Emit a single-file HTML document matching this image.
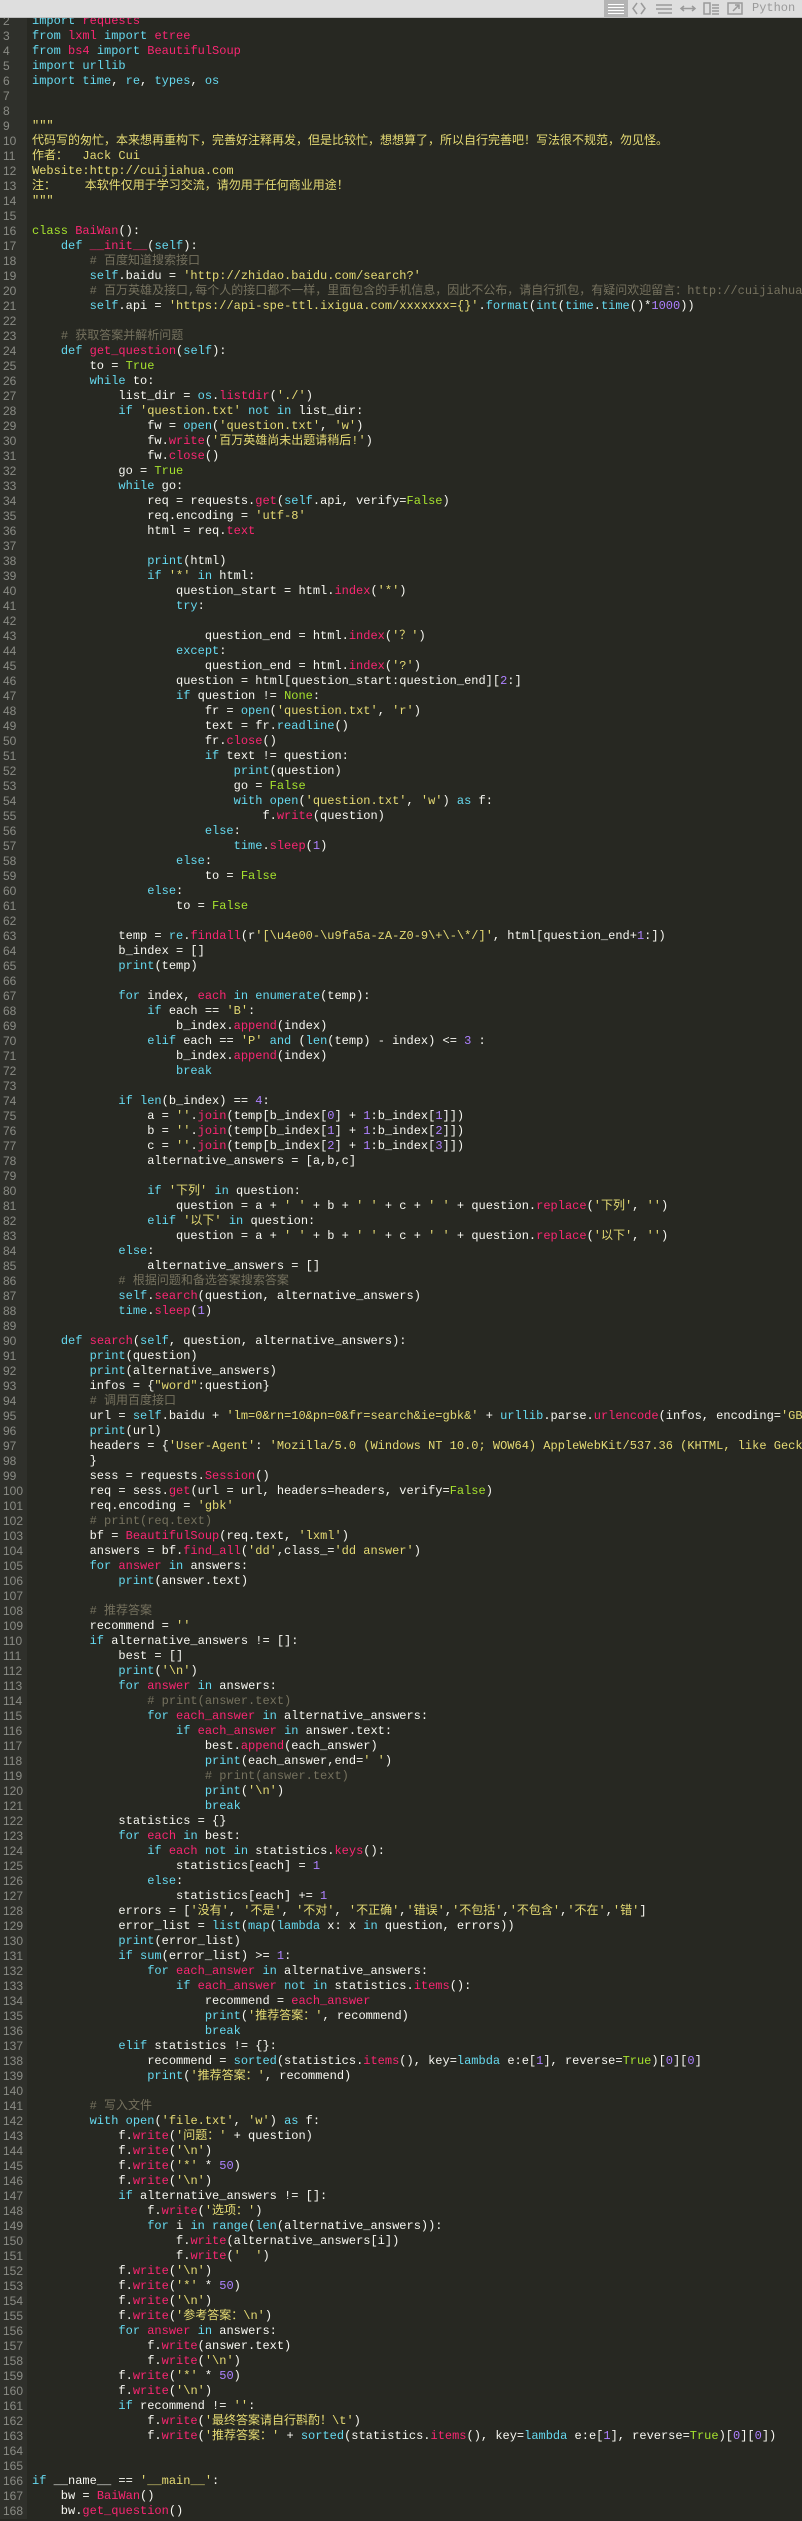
<!DOCTYPE html>
<html><head><meta charset="utf-8">
<style>
html,body{margin:0;padding:0;width:802px;height:2521px;overflow:hidden;background:#272822;}
#w{position:relative;width:802px;height:2521px;overflow:hidden;}
#bar{position:absolute;left:0;top:0;width:802px;height:17px;background:#dedede;border-bottom:1px solid #bdbdbd;z-index:5;}
#bar .hl{position:absolute;left:604px;top:0;width:24px;height:17px;background:#b4b4b4;}
#bar .t{position:absolute;left:752px;top:1px;font:12px "Liberation Mono",monospace;color:#9a9a9a;}
#gut{position:absolute;left:0;top:-1px;width:27px;background:#2f302b;}
#gut div{height:15px;line-height:15px;font:12px/15px "Liberation Sans",sans-serif;color:#8a8b85;padding-left:3px;}
#cw{position:absolute;left:32px;top:-1px;width:770px;height:2522px;overflow:hidden;}
pre{margin:0;font:12px/15px "Liberation Mono","Noto Sans CJK SC",monospace;color:#f8f8f2;white-space:pre;}
.k{color:#66d9ef}.r{color:#f92672}.s{color:#e6db74}.c{color:#75715e}.n{color:#ae81ff}.g{color:#a6e22e}
</style></head><body><div id="w">
<div id="bar">
<div class="hl"><svg width="24" height="17"><g stroke="#fff" stroke-width="1"><line x1="4" y1="4.5" x2="20" y2="4.5"/><line x1="4" y1="7.5" x2="20" y2="7.5"/><line x1="4" y1="10.5" x2="20" y2="10.5"/><line x1="4" y1="13.5" x2="20" y2="13.5"/></g></svg></div>
<svg style="position:absolute;left:630px;top:0" width="120" height="17"><g stroke="#9a9a9a" stroke-width="1.5" fill="none"><path d="M7 3 L3 8.5 L7 14 M11 3 L15 8.5 L11 14"/><path d="M26 5 H42 M26 9 H42 M28 13 H42"/><path d="M51 8.5 H65 M54 6 L51 8.5 L54 11 M62 6 L65 8.5 L62 11"/><rect x="74" y="3" width="6" height="11"/><path d="M82 5 H89 M82 8 H89 M82 11 H89 M82 14 H89"/><rect x="98" y="3" width="14" height="11"/><path d="M103 11 L109 5 M105 5 H109 V9"/></g></svg>
<div class="t">Python</div>
</div>
<div id="gut"></div>
<div id="cw"><pre><span class="c"># -*- coding:UTF-8 -*-</span>
<span class="k">import</span> <span class="r">requests</span>
<span class="k">from</span> <span class="r">lxml</span> <span class="k">import</span> <span class="r">etree</span>
<span class="k">from</span> <span class="r">bs4</span> <span class="k">import</span> <span class="r">BeautifulSoup</span>
<span class="k">import urllib</span>
<span class="k">import time</span>, <span class="k">re</span>, <span class="k">types</span>, <span class="k">os</span>


<span class="s">"""</span>
<span class="s">代码写的匆忙，本来想再重构下，完善好注释再发，但是比较忙，想想算了，所以自行完善吧！写法很不规范，勿见怪。</span>
<span class="s">作者：  Jack Cui</span>
<span class="s">Website:http://cuijiahua.com</span>
<span class="s">注：    本软件仅用于学习交流，请勿用于任何商业用途！</span>
<span class="s">"""</span>

<span class="g">class</span> <span class="r">BaiWan</span>():
    <span class="k">def</span> <span class="r">__init__</span>(<span class="k">self</span>):
        <span class="c"># 百度知道搜索接口</span>
        <span class="k">self</span>.baidu = <span class="s">'http://zhidao.baidu.com/search?'</span>
        <span class="c"># 百万英雄及接口,每个人的接口都不一样，里面包含的手机信息，因此不公布，请自行抓包，有疑问欢迎留言：http://cuijiahua.com</span>
        <span class="k">self</span>.api = <span class="s">'https://api-spe-ttl.ixigua.com/xxxxxxx={}'</span>.<span class="k">format</span>(<span class="k">int</span>(<span class="k">time</span>.<span class="k">time</span>()*<span class="n">1000</span>))

    <span class="c"># 获取答案并解析问题</span>
    <span class="k">def</span> <span class="r">get_question</span>(<span class="k">self</span>):
        to = <span class="g">True</span>
        <span class="k">while</span> to:
            list_dir = <span class="k">os</span>.<span class="r">listdir</span>(<span class="s">'./'</span>)
            <span class="k">if</span> <span class="s">'question.txt'</span> <span class="k">not in</span> list_dir:
                fw = <span class="k">open</span>(<span class="s">'question.txt'</span>, <span class="s">'w'</span>)
                fw.<span class="r">write</span>(<span class="s">'百万英雄尚未出题请稍后!'</span>)
                fw.<span class="r">close</span>()
            go = <span class="g">True</span>
            <span class="k">while</span> go:
                req = requests.<span class="r">get</span>(<span class="k">self</span>.api, verify=<span class="g">False</span>)
                req.encoding = <span class="s">'utf-8'</span>
                html = req.<span class="r">text</span>

                <span class="k">print</span>(html)
                <span class="k">if</span> <span class="s">'*'</span> <span class="k">in</span> html:
                    question_start = html.<span class="r">index</span>(<span class="s">'*'</span>)
                    <span class="k">try</span>:

                        question_end = html.<span class="r">index</span>(<span class="s">'？'</span>)
                    <span class="k">except</span>:
                        question_end = html.<span class="r">index</span>(<span class="s">'?'</span>)
                    question = html[question_start:question_end][<span class="n">2</span>:]
                    <span class="k">if</span> question != <span class="g">None</span>:
                        fr = <span class="k">open</span>(<span class="s">'question.txt'</span>, <span class="s">'r'</span>)
                        text = fr.<span class="k">readline</span>()
                        fr.<span class="r">close</span>()
                        <span class="k">if</span> text != question:
                            <span class="k">print</span>(question)
                            go = <span class="g">False</span>
                            <span class="k">with</span> <span class="k">open</span>(<span class="s">'question.txt'</span>, <span class="s">'w'</span>) <span class="k">as</span> f:
                                f.<span class="r">write</span>(question)
                        <span class="k">else</span>:
                            <span class="k">time</span>.<span class="r">sleep</span>(<span class="n">1</span>)
                    <span class="k">else</span>:
                        to = <span class="g">False</span>
                <span class="k">else</span>:
                    to = <span class="g">False</span>

            temp = <span class="k">re</span>.<span class="r">findall</span>(r<span class="s">'[\u4e00-\u9fa5a-zA-Z0-9\+\-\*/]'</span>, html[question_end+<span class="n">1</span>:])
            b_index = []
            <span class="k">print</span>(temp)

            <span class="k">for</span> index, <span class="r">each</span> <span class="k">in</span> <span class="k">enumerate</span>(temp):
                <span class="k">if</span> each == <span class="s">'B'</span>:
                    b_index.<span class="r">append</span>(index)
                <span class="k">elif</span> each == <span class="s">'P'</span> <span class="k">and</span> (<span class="k">len</span>(temp) - index) &lt;= <span class="n">3</span> :
                    b_index.<span class="r">append</span>(index)
                    <span class="k">break</span>

            <span class="k">if</span> <span class="k">len</span>(b_index) == <span class="n">4</span>:
                a = <span class="s">''</span>.<span class="r">join</span>(temp[b_index[<span class="n">0</span>] + <span class="n">1</span>:b_index[<span class="n">1</span>]])
                b = <span class="s">''</span>.<span class="r">join</span>(temp[b_index[<span class="n">1</span>] + <span class="n">1</span>:b_index[<span class="n">2</span>]])
                c = <span class="s">''</span>.<span class="r">join</span>(temp[b_index[<span class="n">2</span>] + <span class="n">1</span>:b_index[<span class="n">3</span>]])
                alternative_answers = [a,b,c]

                <span class="k">if</span> <span class="s">'下列'</span> <span class="k">in</span> question:
                    question = a + <span class="s">' '</span> + b + <span class="s">' '</span> + c + <span class="s">' '</span> + question.<span class="r">replace</span>(<span class="s">'下列'</span>, <span class="s">''</span>)
                <span class="k">elif</span> <span class="s">'以下'</span> <span class="k">in</span> question:
                    question = a + <span class="s">' '</span> + b + <span class="s">' '</span> + c + <span class="s">' '</span> + question.<span class="r">replace</span>(<span class="s">'以下'</span>, <span class="s">''</span>)
            <span class="k">else</span>:
                alternative_answers = []
            <span class="c"># 根据问题和备选答案搜索答案</span>
            <span class="k">self</span>.<span class="r">search</span>(question, alternative_answers)
            <span class="k">time</span>.<span class="r">sleep</span>(<span class="n">1</span>)

    <span class="k">def</span> <span class="r">search</span>(<span class="k">self</span>, question, alternative_answers):
        <span class="k">print</span>(question)
        <span class="k">print</span>(alternative_answers)
        infos = {<span class="s">"word"</span>:question}
        <span class="c"># 调用百度接口</span>
        url = <span class="k">self</span>.baidu + <span class="s">'lm=0&amp;rn=10&amp;pn=0&amp;fr=search&amp;ie=gbk&amp;'</span> + <span class="k">urllib</span>.parse.<span class="r">urlencode</span>(infos, encoding=<span class="s">'GB18030'</span>)
        <span class="k">print</span>(url)
        headers = {<span class="s">'User-Agent'</span>: <span class="s">'Mozilla/5.0 (Windows NT 10.0; WOW64) AppleWebKit/537.36 (KHTML, like Gecko) Chrome/63.0 Safari/537.36'</span>,
        }
        sess = requests.<span class="r">Session</span>()
        req = sess.<span class="r">get</span>(url = url, headers=headers, verify=<span class="g">False</span>)
        req.encoding = <span class="s">'gbk'</span>
        <span class="c"># print(req.text)</span>
        bf = <span class="r">BeautifulSoup</span>(req.text, <span class="s">'lxml'</span>)
        answers = bf.<span class="r">find_all</span>(<span class="s">'dd'</span>,class_=<span class="s">'dd answer'</span>)
        <span class="k">for</span> <span class="r">answer</span> <span class="k">in</span> answers:
            <span class="k">print</span>(answer.text)

        <span class="c"># 推荐答案</span>
        recommend = <span class="s">''</span>
        <span class="k">if</span> alternative_answers != []:
            best = []
            <span class="k">print</span>(<span class="s">'\n'</span>)
            <span class="k">for</span> <span class="r">answer</span> <span class="k">in</span> answers:
                <span class="c"># print(answer.text)</span>
                <span class="k">for</span> <span class="r">each_answer</span> <span class="k">in</span> alternative_answers:
                    <span class="k">if</span> <span class="r">each_answer</span> <span class="k">in</span> answer.text:
                        best.<span class="r">append</span>(each_answer)
                        <span class="k">print</span>(each_answer,end=<span class="s">' '</span>)
                        <span class="c"># print(answer.text)</span>
                        <span class="k">print</span>(<span class="s">'\n'</span>)
                        <span class="k">break</span>
            statistics = {}
            <span class="k">for</span> <span class="r">each</span> <span class="k">in</span> best:
                <span class="k">if</span> <span class="r">each</span> <span class="k">not in</span> statistics.<span class="r">keys</span>():
                    statistics[each] = <span class="n">1</span>
                <span class="k">else</span>:
                    statistics[each] += <span class="n">1</span>
            errors = [<span class="s">'没有'</span>, <span class="s">'不是'</span>, <span class="s">'不对'</span>, <span class="s">'不正确'</span>,<span class="s">'错误'</span>,<span class="s">'不包括'</span>,<span class="s">'不包含'</span>,<span class="s">'不在'</span>,<span class="s">'错'</span>]
            error_list = <span class="k">list</span>(<span class="k">map</span>(<span class="k">lambda</span> x: x <span class="k">in</span> question, errors))
            <span class="k">print</span>(error_list)
            <span class="k">if</span> <span class="k">sum</span>(error_list) &gt;= <span class="n">1</span>:
                <span class="k">for</span> <span class="r">each_answer</span> <span class="k">in</span> alternative_answers:
                    <span class="k">if</span> <span class="r">each_answer</span> <span class="k">not in</span> statistics.<span class="r">items</span>():
                        recommend = <span class="r">each_answer</span>
                        <span class="k">print</span>(<span class="s">'推荐答案：'</span>, recommend)
                        <span class="k">break</span>
            <span class="k">elif</span> statistics != {}:
                recommend = <span class="k">sorted</span>(statistics.<span class="r">items</span>(), key=<span class="k">lambda</span> e:e[<span class="n">1</span>], reverse=<span class="g">True</span>)[<span class="n">0</span>][<span class="n">0</span>]
                <span class="k">print</span>(<span class="s">'推荐答案：'</span>, recommend)

        <span class="c"># 写入文件</span>
        <span class="k">with</span> <span class="k">open</span>(<span class="s">'file.txt'</span>, <span class="s">'w'</span>) <span class="k">as</span> f:
            f.<span class="r">write</span>(<span class="s">'问题：'</span> + question)
            f.<span class="r">write</span>(<span class="s">'\n'</span>)
            f.<span class="r">write</span>(<span class="s">'*'</span> * <span class="n">50</span>)
            f.<span class="r">write</span>(<span class="s">'\n'</span>)
            <span class="k">if</span> alternative_answers != []:
                f.<span class="r">write</span>(<span class="s">'选项：'</span>)
                <span class="k">for</span> i <span class="k">in</span> <span class="k">range</span>(<span class="k">len</span>(alternative_answers)):
                    f.<span class="r">write</span>(alternative_answers[i])
                    f.<span class="r">write</span>(<span class="s">'  '</span>)
            f.<span class="r">write</span>(<span class="s">'\n'</span>)
            f.<span class="r">write</span>(<span class="s">'*'</span> * <span class="n">50</span>)
            f.<span class="r">write</span>(<span class="s">'\n'</span>)
            f.<span class="r">write</span>(<span class="s">'参考答案：\n'</span>)
            <span class="k">for</span> <span class="r">answer</span> <span class="k">in</span> answers:
                f.<span class="r">write</span>(answer.text)
                f.<span class="r">write</span>(<span class="s">'\n'</span>)
            f.<span class="r">write</span>(<span class="s">'*'</span> * <span class="n">50</span>)
            f.<span class="r">write</span>(<span class="s">'\n'</span>)
            <span class="k">if</span> recommend != <span class="s">''</span>:
                f.<span class="r">write</span>(<span class="s">'最终答案请自行斟酌！\t'</span>)
                f.<span class="r">write</span>(<span class="s">'推荐答案：'</span> + <span class="k">sorted</span>(statistics.<span class="r">items</span>(), key=<span class="k">lambda</span> e:e[<span class="n">1</span>], reverse=<span class="g">True</span>)[<span class="n">0</span>][<span class="n">0</span>])


<span class="k">if</span> __name__ == <span class="s">'__main__'</span>:
    bw = <span class="r">BaiWan</span>()
    bw.<span class="r">get_question</span>()</pre></div>
<script>
var g=document.getElementById('gut'),h='';
for(var i=1;i<=168;i++)h+='<div>'+i+'</div>';
g.innerHTML=h;
</script>
</div></body></html>
